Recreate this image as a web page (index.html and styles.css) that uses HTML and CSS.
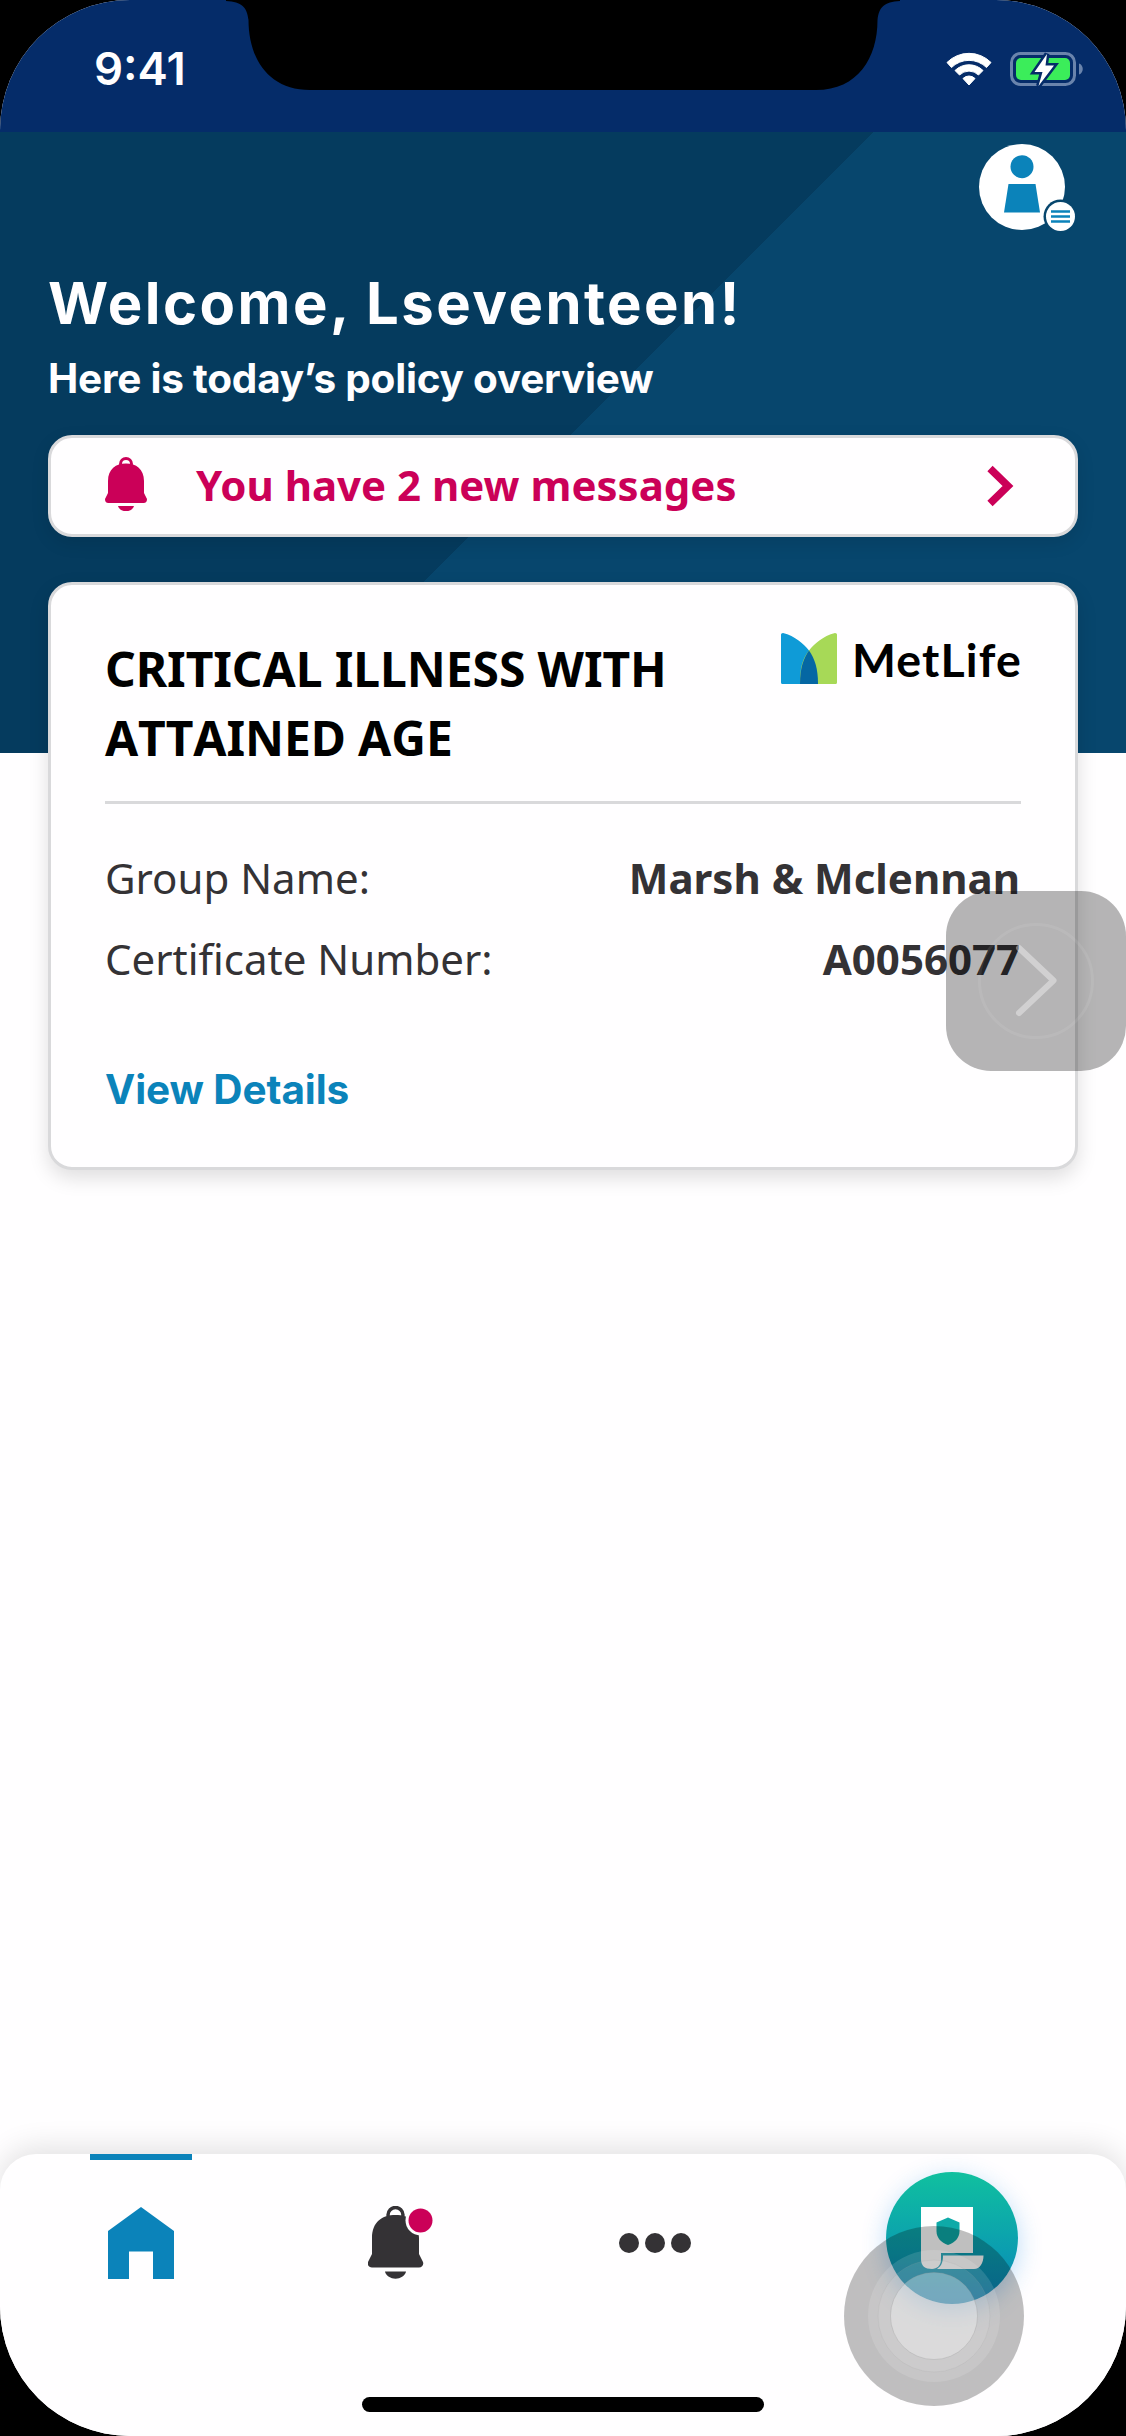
FILE: index.html
```html
<!DOCTYPE html>
<html lang="en">
<head>
<meta charset="utf-8">
<title>MetLife</title>
<link rel="stylesheet" href="styles.css">
</head>
<body>
<div class="phone">
  <header class="status">
    <span class="time">9:41</span>
    <div class="status-icons">
      <svg class="wifi" viewBox="0 0 46 34" width="46" height="34">
        <path d="M1 10.500A31 31 0 0 1 45 10.500L40.500 15.500A25 25 0 0 0 5.500 15.500Z" fill="#fff" stroke="#fff" stroke-linejoin="round"/>
        <path d="M9 18.500A20 20 0 0 1 37 18.500L32.500 23A13.500 13.500 0 0 0 13.500 23Z" fill="#fff" stroke="#fff" stroke-linejoin="round"/>
        <path d="M17 26.500A8.500 8.500 0 0 1 29 26.500L23 33Z" fill="#fff" stroke="#fff" stroke-linejoin="round"/>
      </svg>
      <svg class="battery" viewBox="0 0 74 38" width="74" height="38">
        <rect x="1.500" y="3.500" width="63" height="31" rx="9" fill="none" stroke="#6a84ac" stroke-width="3"/>
        <path d="M69 13.500C74 15 74 23 69 24.500Z" fill="#6a84ac"/>
        <rect x="6" y="8" width="54" height="22" rx="5" fill="#3bed5a"/>
        <path d="M37 4L24.500 22H32.500L28.500 36L44 15.500H35.500Z" fill="#fff" stroke="#052c69" stroke-width="5"/>
        <path d="M37 4L24.500 22H32.500L28.500 36L44 15.500H35.500Z" fill="#fff"/>
      </svg>
    </div>
  </header>
  <svg class="notch" viewBox="0 0 674 90" width="674" height="90">
    <path d="M0 0V1C16 2 21 7 22.500 20C22.500 58 42 90 84 90H590C632 90 651.500 58 651.500 20C653 7 658 2 674 1V0Z"/>
  </svg>

  <main class="main">
    <div class="profile">
      <svg viewBox="0 0 100 90" width="100" height="90">
        <circle cx="43" cy="43" r="43" fill="#fff"/>
        <circle cx="43" cy="22.700" r="11.500" fill="#0b83ba"/>
        <path d="M29.500 40H56.500L61 68.500H25Z" fill="#0b83ba"/>
        <circle cx="81.500" cy="72.500" r="17" fill="#07466d"/>
        <circle cx="81.500" cy="72.500" r="14.500" fill="#fff"/>
        <path d="M72 67.500H91M72 72.500H91M72 77.500H91" stroke="#0b83ba" stroke-width="2.500"/>
      </svg>
    </div>
    <h1 class="welcome">Welcome, Lseventeen!</h1>
    <p class="sub">Here is today’s policy overview</p>
    <a class="messages">
      <svg class="alert-bell" viewBox="0 0 42 54" width="42" height="54">
        <circle cx="21" cy="7" r="5.500" fill="none" stroke="#cb0058" stroke-width="3"/>
        <path d="M3 36V24C3 12 11 6.500 21 6.500S39 12 39 24V36L42 42C42 44.500 41 46 38.500 46H3.500C1 46 0 44.500 0 42Z" fill="#cb0058"/>
        <path d="M13 49H29C27 56 15 56 13 49Z" fill="#cb0058"/>
      </svg>
      <span class="messages-text">You have 2 new messages</span>
      <svg viewBox="0 0 27 42" width="27" height="42"><path d="M3 3.500L21 21L3 38.500" fill="none" stroke="#cb0058" stroke-width="7.500"/></svg>
    </a>
    <section class="card">
      <div class="card-head">
        <h2 class="card-title">CRITICAL ILLNESS WITH ATTAINED AGE</h2>
        <div class="logo">
          <svg viewBox="0 0 56 51" width="56" height="51">
            <path d="M0 1.500Q0 0 2 0C14 3 23 11 28 17.500C35 26 37 36 37 51H1.500Q0 51 0 49.500Z" fill="#0f9bd7"/>
            <path d="M56 1.500Q56 0 54 0C42 3 33 11 28 17.500C21 26 19 36 19 51H54.500Q56 51 56 49.500Z" fill="#a7d957"/>
            <path d="M28 17.500C34 26 37 36 37 51H19C19 36 22 26 28 17.500Z" fill="#0567a3"/>
          </svg>
          <span class="logo-text">MetLife</span>
        </div>
      </div>
      <div class="row"><span>Group Name:</span><b>Marsh &amp; Mclennan</b></div>
      <div class="row"><span>Certificate Number:</span><b>A0056077</b></div>
      <a class="details">View Details</a>
    </section>
  </main>

  <nav class="tabs">
    <div class="tab active">
      <svg viewBox="0 0 66 72" width="66" height="72"><path d="M33 0L66 24V72H45V44.500H21V72H0V24Z" fill="#0b83ba"/></svg>
    </div>
    <div class="tab">
      <svg class="tab-bell" viewBox="0 0 68 74" width="68" height="74">
        <circle cx="27.500" cy="9" r="7.500" fill="none" stroke="#343235" stroke-width="3.500"/>
        <path d="M4 48V32C4 16 14 9 27.500 9S51 16 51 32V48L55 56C56 59 54 61.500 51 61.500H4C1 61.500 -1 59 0 56Z" fill="#343235"/>
        <path d="M17 65.500H38C36 75 19 75 17 65.500Z" fill="#343235"/>
        <circle cx="52.500" cy="14.500" r="15" fill="#fffeff"/>
        <circle cx="52.500" cy="14.500" r="12" fill="#cb0058"/>
      </svg>
    </div>
    <div class="tab">
      <svg viewBox="0 0 72 20" width="72" height="20"><circle cx="10" cy="10" r="10" fill="#343235"/><circle cx="36" cy="10" r="10" fill="#343235"/><circle cx="62" cy="10" r="10" fill="#343235"/></svg>
    </div>
    <div class="tab tab-policy">
      <div class="policy">
        <svg viewBox="0 0 64 64" width="64" height="64">
          <path d="M0 0H52V46H20V53C20 58 16 62 11 62C4 62 0 59 0 52Z" fill="#fff"/>
          <path d="M22 48.500H62.500C62.500 56 59 62 53 62H16C20 59 22 56 22 48.500Z" fill="#fff"/>
          <path d="M27 10.500L38.500 15.500V24C38.500 31 34 35.500 27 38C20 35.500 15.500 31 15.500 24V15.500Z" fill="#0eaaa8"/>
        </svg>
      </div>
    </div>
  </nav>

  <svg class="assist" viewBox="0 0 180 180" width="180" height="180">
    <rect width="180" height="180" rx="45" fill="#000" fill-opacity=".29"/>
    <circle cx="90" cy="90" r="56.500" fill="none" stroke="#fff" stroke-opacity=".08" stroke-width="3"/>
    <path d="M73 57L107.500 89.500L73 122" fill="none" stroke="#fff" stroke-opacity=".38" stroke-width="6" stroke-linecap="round" stroke-linejoin="round"/>
  </svg>
  <svg class="touch" viewBox="0 0 180 180" width="180" height="180">
    <circle cx="90" cy="90" r="90" fill="#000" fill-opacity=".25"/>
    <circle cx="90" cy="90" r="66" fill="#fff" fill-opacity=".13"/>
    <circle cx="90" cy="90" r="56" fill="#fff" fill-opacity=".09" stroke="#999" stroke-opacity=".15"/>
    <circle cx="90" cy="90" r="43.500" fill="#fff" fill-opacity=".3" stroke="#999" stroke-opacity=".3"/>
  </svg>
  <div class="home-bar"></div>
</div>
</body>
</html>
```
FILE: styles.css
```css
* { box-sizing: border-box; }
body { margin: 0; background: #000; font-family: "Noto Sans", sans-serif; }
h1, h2, p { margin: 0; }
svg { display: block; flex: none; }
.phone {
  position: relative;
  display: flex;
  flex-direction: column;
  width: 1126px;
  height: 2436px;
  overflow: hidden;
  border-radius: 130px;
  background: #fffeff;
}
.status {
  display: flex;
  justify-content: space-between;
  height: 132px;
  padding: 50px 42px 0 94px;
  background: #052c69;
}
.time {
  font: 600 45.500px/38px Inter, sans-serif;
  color: #fffeff;
}
.status-icons { display: flex; gap: 18px; }
.wifi { margin-top: 2px; }
.notch { position: absolute; left: 226px; top: 0; }
.main {
  flex: 1;
  display: flex;
  flex-direction: column;
  padding: 12px 48px 0;
  background: linear-gradient(135deg, #053b5e 50%, #07466d 50%) top / 100% 621px no-repeat;
}
.profile {
  display: flex;
  justify-content: flex-end;
  height: 124px;
  margin-right: -1px;
}
.welcome {
  height: 81px;
  font: 700 58px/70px Inter, sans-serif;
  letter-spacing: 2.450px;
  color: #fffeff;
}
.sub {
  height: 86px;
  font: 700 40.500px/60px Inter, sans-serif;
  letter-spacing: -.23px;
  color: #fffeff;
}
.messages {
  display: flex;
  align-items: center;
  height: 102px;
  padding: 0 61px 0 54px;
  border: 3px solid #d9d9db;
  border-radius: 24px;
  background: #fffeff;
  color: #cb0058;
  box-shadow: 0 6px 18px rgba(0, 0, 0, .1);
}
.alert-bell { margin-bottom: 5px; }
.messages-text {
  flex: 1;
  margin: 0 0 3px 49px;
  font-size: 42px;
  font-weight: 700;
}
.card {
  height: 588px;
  margin-top: 45px;
  padding: 0 54px;
  border: 3px solid #d9d9db;
  border-radius: 24px;
  background: #fffeff;
  box-shadow: 0 8px 20px rgba(0, 0, 0, .13);
}
.card-head {
  display: flex;
  justify-content: space-between;
  height: 219px;
  padding-top: 48px;
  border-bottom: 3px solid #d9d9db;
  margin-bottom: 33px;
}
.card-title {
  width: 600px;
  padding-top: 1px;
  font-size: 48px;
  line-height: 69px;
  letter-spacing: -.1px;
  font-kerning: none;
  color: #000;
}
.logo { display: flex; }
.logo-text {
  margin: 0 -1px 0 15px;
  font: 700 46.500px/52px Lato, sans-serif;
  letter-spacing: 1.150px;
  color: #000;
}
.row {
  display: flex;
  justify-content: space-between;
  height: 81px;
  padding-right: 1px;
  font-size: 42px;
  line-height: 81px;
  color: #343235;
}
.details {
  display: block;
  margin-top: 61px;
  font: 700 40.500px/60px Inter, sans-serif;
  letter-spacing: -.1px;
  color: #0b83ba;
}
.tabs {
  display: grid;
  grid-template-columns: repeat(4, 257px);
  height: 282px;
  padding-left: 12.500px;
  border-radius: 36px 36px 0 0;
  background: #fffeff;
  box-shadow: 0 -6px 30px rgba(0, 0, 0, .12);
}
.tab {
  display: flex;
  justify-content: center;
  align-items: center;
  height: 177px;
}
.active {
  background: linear-gradient(#0b83ba, #0b83ba) top / 102px 6px no-repeat;
}
.tab-bell { margin-left: 7px; }
.tab-policy { padding: 0 0 9px 80px; }
.policy {
  display: flex;
  width: 132px;
  height: 132px;
  padding: 35px;
  border-radius: 50%;
  background: linear-gradient(#10c09f, #0b9db0 60%, #0a83ba);
  box-shadow: 0 6px 24px rgba(30, 140, 230, .3);
}
.assist { position: absolute; left: 946px; top: 891px; }
.touch { position: absolute; left: 844px; top: 2226px; }
.home-bar {
  position: absolute;
  left: 362px;
  top: 2397px;
  width: 402px;
  height: 15px;
  border-radius: 8px;
  background: #000;
}
```
